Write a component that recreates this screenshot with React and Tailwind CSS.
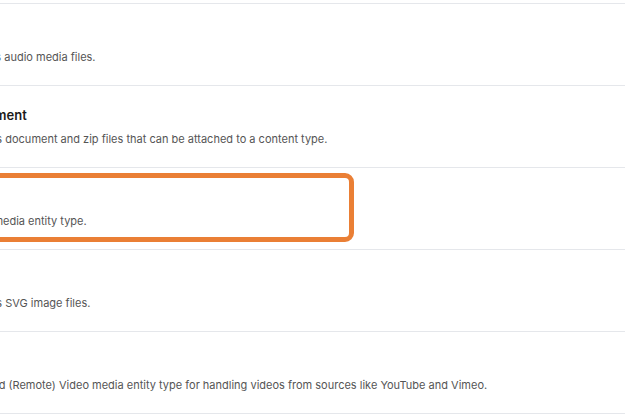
import React from 'react'

const rows = [
  { title: 'Audio', desc: 'Provides audio media files.', shift: 'ml-[-39px]', descShift: 'ml-[-5px]' },
  { title: 'Document', desc: 'Provides document and zip files that can be attached to a content type.', shift: 'ml-[-38px]', descShift: 'ml-[-5px]' },
  { title: 'Image', desc: 'The default Image media entity type.', shift: 'ml-[-104px]', descShift: 'ml-0' },
  { title: 'SVG', desc: 'Provides SVG image files.', shift: 'ml-[-38px]', descShift: 'ml-[-5px]' },
  { title: 'Video', desc: 'A standard (Remote) Video media entity type for handling videos from sources like YouTube and Vimeo.', shift: 'ml-[-51px]', descShift: 'ml-0' },
]

const App = () => {
  return (
    <div className="w-[625px] h-[417px] bg-white overflow-hidden relative font-[Inter,sans-serif]">
      <div className="h-[3px]" />
      <ul className="border-t border-gray-200">
        {rows.map((r) => (
          <li key={r.title} className="border-b border-gray-200 pt-[21px] pb-[20px]">
            <div className={`${r.shift} whitespace-nowrap`}>
              <p className="text-[13px] leading-4 font-semibold text-[#1b1b1b]">{r.title}</p>
              <p className={`${r.descShift} mt-[8px] text-[11px] leading-4 text-[#555555]`}>{r.desc}</p>
            </div>
          </li>
        ))}
      </ul>

      {/* highlight annotation */}
      <div className="absolute left-[-20px] top-[173px] w-[374px] h-[69px] border-[5px] border-[#ea7f35] rounded-[9px]" />
    </div>
  )
}

export default App
